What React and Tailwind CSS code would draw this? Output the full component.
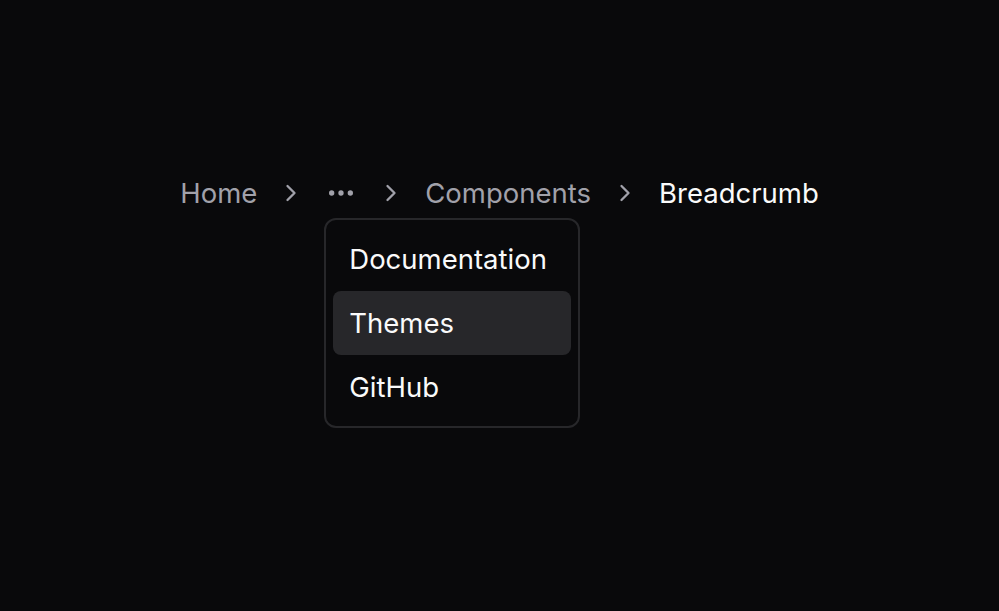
import React from "react";
import { ChevronRight, Ellipsis } from "lucide-react";

export default function App() {
  const sep = (
    <li className="flex items-center text-[#a1a1aa]" aria-hidden="true">
      <ChevronRight size={28} strokeWidth={2} />
    </li>
  );
  return (
    <div
      className="w-[999px] h-[611px] bg-[#09090b] flex justify-center pt-[173px]"
      style={{ fontFamily: "Inter, 'Noto Sans', sans-serif" }}
    >
      <ol className="flex items-center gap-[20px] h-[40px] text-[27.5px] leading-[40px] text-[#a1a1aa]">
        <li className="flex items-center">Home</li>
        {sep}
        <li className="relative flex items-center h-[40px]">
          <span className="flex w-[32px] h-[32px] items-center justify-center text-[#a1a1aa]">
            <Ellipsis size={32} strokeWidth={2} />
          </span>
          <div className="absolute left-[-1px] top-[45px] w-[256px] rounded-[12px] border-2 border-[#27272a] bg-[#09090b] p-[7px] text-[#fafafa]">
            <div className="rounded-[8px] px-[16px] py-[12px] leading-[40px]">Documentation</div>
            <div className="rounded-[8px] px-[16px] py-[12px] leading-[40px] bg-[#27272a]">Themes</div>
            <div className="rounded-[8px] px-[16px] py-[12px] leading-[40px]">GitHub</div>
          </div>
        </li>
        {sep}
        <li className="flex items-center">Components</li>
        {sep}
        <li className="flex items-center text-[#fafafa]">Breadcrumb</li>
      </ol>
    </div>
  );
}
